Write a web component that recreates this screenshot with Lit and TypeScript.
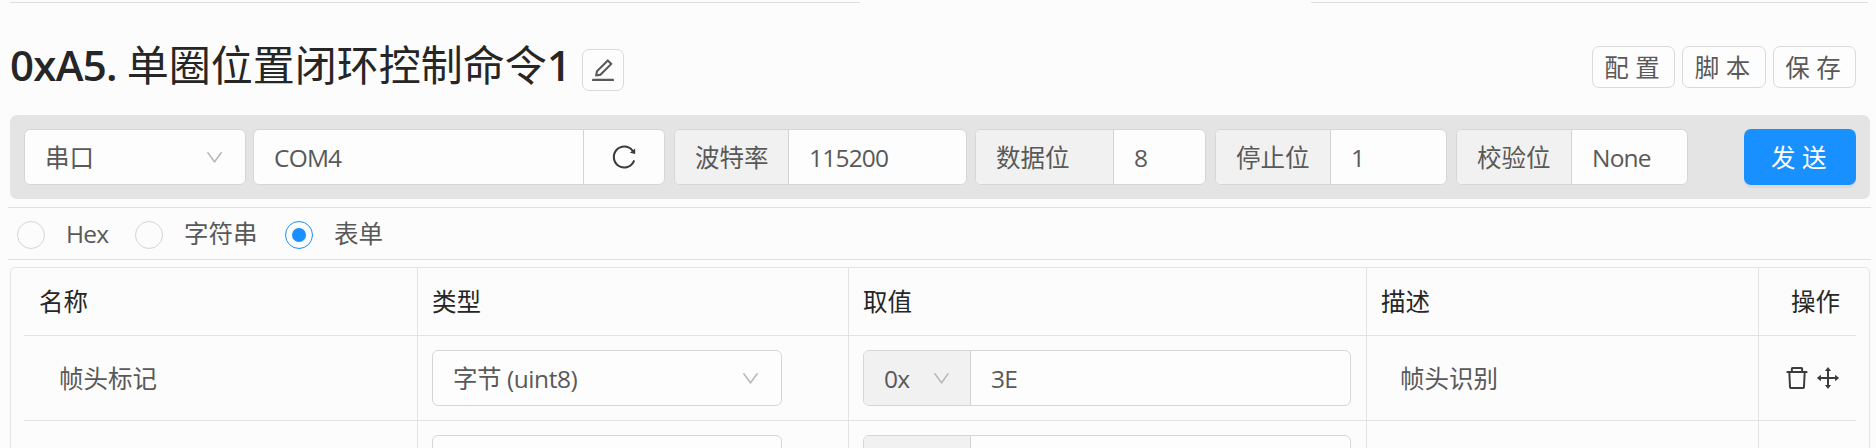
import { LitElement, html, css, svg } from "lit";
import { customElement, property } from "lit/decorators.js";

const ICONS: Record<string, string> = {
  edit: "M257.7 752c2 0 4-.2 6-.5L431.9 722c2-.4 3.9-1.3 5.3-2.8l423.9-423.9a9.96 9.96 0 000-14.1L694.9 114.9c-1.9-1.9-4.4-2.9-7.1-2.9s-5.2 1-7.1 2.9L256.8 538.8c-1.5 1.5-2.4 3.3-2.8 5.3l-29.5 168.2a33.5 33.5 0 009.4 29.8c6.6 6.4 14.9 9.9 23.8 9.9zm67.4-174.4L687.8 215l73.3 73.3-362.7 362.6-88.9 15.7 15.6-89zM880 836H144c-17.7 0-32 14.3-32 32v36c0 4.4 3.6 8 8 8h784c4.4 0 8-3.6 8-8v-36c0-17.7-14.3-32-32-32z",
  reload: "M909.1 209.3l-56.4 44.1C775.8 155.1 656.2 92 521.9 92 290 92 102.3 279.5 102 511.5 101.7 743.7 289.8 932 521.9 932c181.3 0 335.8-115 394.6-276.1 1.5-4.2-.7-8.9-4.9-10.3l-56.7-19.5a8 8 0 00-10.1 4.8c-1.8 5-3.8 10-5.9 14.9-17.3 41-42.1 77.8-73.7 109.4A344.77 344.77 0 01655.9 829c-42.3 17.9-87.4 27-133.8 27-46.5 0-91.5-9.1-133.8-27A341.5 341.5 0 01279 755.2a342.16 342.16 0 01-73.7-109.4c-17.9-42.4-27-87.4-27-133.9s9.1-91.5 27-133.9c17.3-41 42.1-77.8 73.7-109.4 31.6-31.6 68.4-56.4 109.3-73.8 42.3-17.9 87.4-27 133.8-27 46.5 0 91.5 9.1 133.8 27a341.5 341.5 0 01109.3 73.8c9.9 9.9 19.2 20.4 27.8 31.4l-60.2 47a8 8 0 003 14.1l175.6 43c5 1.2 9.9-2.6 9.9-7.7l.8-180.9c-.1-6.6-7.8-10.3-13-6.2z",
  trash: "M360 184h-8c4.4 0 8-3.6 8-8v8h304v-8c0 4.4 3.6 8 8 8h-8v72h72v-80c0-35.3-28.7-64-64-64H352c-35.3 0-64 28.7-64 64v80h72v-72zm504 72H160c-17.7 0-32 14.3-32 32v32c0 4.4 3.6 8 8 8h60.4l24.7 523c1.6 34.1 29.8 61 63.9 61h454c34.2 0 62.3-26.8 63.9-61l24.7-523H888c4.4 0 8-3.6 8-8v-32c0-17.7-14.3-32-32-32zM731.3 840H292.7l-24.2-512h487l-24.2 512z",
  drag: "M909.3 506.3L781.7 405.6a7.23 7.23 0 00-11.7 5.7V476H548V254h64.8c6 0 9.4-7 5.7-11.7L517.7 114.7a7.14 7.14 0 00-11.3 0L405.6 242.3a7.23 7.23 0 005.7 11.7H476v222H254v-64.8c0-6-7-9.4-11.7-5.7L114.7 506.3a7.14 7.14 0 000 11.3l127.5 100.8c4.7 3.7 11.7.4 11.7-5.7V548h222v222h-64.8c-6 0-9.4 7-5.7 11.7l100.8 127.5c2.9 3.7 8.5 3.7 11.3 0l100.8-127.5c3.7-4.7.4-11.7-5.7-11.7H548V548h222v64.8c0 6 7 9.4 11.7 5.7l127.5-100.8a7.3 7.3 0 00.1-11.4z",
  down: "M884 256h-75c-5.1 0-9.9 2.5-12.9 6.6L512 654.2 227.9 262.6c-3-4.1-7.8-6.6-12.9-6.6h-75c-6.5 0-10.3 7.4-6.5 12.7l352.6 486.1c12.8 17.6 39 17.6 51.7 0l352.6-486.1c3.9-5.3.1-12.7-6.4-12.7z",
};

@customElement("ui-icon")
class UiIcon extends LitElement {
  @property() name = "down";
  static styles = css`
    :host { display: block; width: 28px; height: 28px; flex: none; }
    svg { display: block; width: 100%; height: 100%; fill: currentColor; }
  `;
  render() {
    return html`<svg viewBox="0 0 1024 1024">${svg`<path d=${ICONS[this.name]}></path>`}</svg>`;
  }
}

@customElement("app-root")
class AppRoot extends LitElement {
  static styles = css`
    :host {
      display: block; height: 448px; overflow: hidden; background: #fcfcfc; color: #595959;
      font: 24.5px/36px "Open Sans", "Noto Sans CJK SC", sans-serif;
    }
    * { box-sizing: border-box; }
    .page { padding: 2px 6px 0 10px; }
    .tabline { display: flex; justify-content: space-between; height: 1px; }
    .tabline i { background: #dedee2; width: 850px; }
    .tabline i + i { width: 557px; margin-right: 2px; }
    .head { display: flex; height: 112px; padding: 42px 14px 0 0; align-items: flex-start; }
    .title {
      width: 557px; margin: -8px 15px 0 0; white-space: nowrap; color: #262626;
      font-size: 42px; line-height: 56px; font-weight: 400;
    }
    .title b { font-weight: 600; letter-spacing: -0.75px; }
    .btn {
      height: 42px; border: 1px solid #d9d9de; border-radius: 7px; background: #fdfdfd;
      display: flex; align-items: center; justify-content: center;
    }
    .edit { width: 42px; margin-top: 4px; }
    .actions { margin: 1px 0 0 auto; display: flex; gap: 7px; }
    .actions .btn { width: 83.5px; letter-spacing: 6.5px; padding: 2px 0 0 4px; }
    .bar {
      display: flex; width: 1860px; height: 84px; padding: 14px; border-radius: 7px; background: #e4e4e4;
    }
    .box {
      display: flex; height: 56px; border: 1px solid #d6d6da; border-radius: 6px; background: #fdfdfd; overflow: hidden;
    }
    .cell { display: flex; align-items: center; padding: 1px 19px 0 20px; white-space: nowrap; }
    .cell + .cell { border-left: 1px solid #d3d3d8; }
    .grow { flex: 1; }
    .addon { background: #f1f1f1; }
    .lat { letter-spacing: -0.8px; }
    .spread { justify-content: space-between; }
    .chev { width: 21px; height: 21px; color: #b8b8bc; margin-right: 1px; }
    .kind { width: 222px; margin-right: 7px; }
    .port { width: 412px; margin-right: 9px; }
    .reload { width: 81px; justify-content: center; padding: 0; color: #3c3c3c; }
    .baud { width: 293px; margin-right: 8px; }
    .data { width: 231px; margin-right: 9px; }
    .stop { width: 232px; margin-right: 9px; }
    .parity { width: 232px; }
    .w113 { width: 113px; }
    .w114 { width: 114px; }
    .w138 { width: 137px; }
    .send {
      margin-left: auto; width: 112px; height: 56px; border-radius: 7px; background: #1890ff; color: #fff;
      display: flex; align-items: center; justify-content: center; letter-spacing: 6.5px; padding: 2px 0 0 4px;
      box-shadow: 0 3px 0 rgba(0, 0, 0, 0.045);
    }
    .modes {
      display: flex; align-items: center; height: 53px; width: 1863px; margin: 8px 0 0 -2px; padding-left: 9px;
      border-top: 1px solid #dfdfe6; border-bottom: 1px solid #dfdfe6;
    }
    .radio {
      width: 28px; height: 28px; border: 1px solid #d5d5da; border-radius: 50%; flex: none; margin-top: 2px;
      display: flex; align-items: center; justify-content: center;
    }
    .radio.on { border: 1.5px solid #1890ff; }
    .radio.on::after { content: ""; width: 14px; height: 14px; border-radius: 50%; background: #1890ff; }
    .mode { padding: 1px 0 0 21px; }
    .m1 { width: 90px; } .m2 { width: 122px; } .m3 { width: 100px; }
    .table {
      width: 1860px; height: 200px; margin-top: 7px; border: 1px solid #e2e2e8; border-radius: 5px;
      padding: 0 13px;
    }
    .row { display: grid; grid-template-columns: 393px 431px 518px 392px 97px; height: 85px; border-bottom: 1px solid #e2e2e6; }
    .row.h { height: 68px; color: #262626; }
    .row > div { border-left: 1px solid #e4e4e4; padding-left: 14px; display: flex; align-items: center; }
    .row.h > div { padding-top: 1px; }
    .row > div:first-child { border-left: 0; padding-left: 15px; }
    .row.h > div:last-child { padding-left: 32px; }
    .row > .txt { padding: 2px 0 0 33px; }
    .row > .txt:first-child { padding-left: 35px; }
    .row > .ops { padding-left: 24px; gap: 3px; color: #3c3c3c; }
    .type { width: 350px; }
    .type .lat { letter-spacing: -0.45px; }
    .value { width: 488px; }
    .pre { width: 106px; padding-right: 17px; }
  `;

  private row(name: string, type: string, pre: string, value: string, desc: string, last = false) {
    return html`<div class="row">
      <div class="txt">${name}</div>
      <div><span class="box type"><span class="cell grow spread"><span class="lat">${type}</span><ui-icon class="chev"></ui-icon></span></span></div>
      <div><span class="box value">
        <span class="cell addon pre spread"><span class="lat">${pre}</span><ui-icon class="chev"></ui-icon></span>
        <span class="cell grow lat">${value}</span></span></div>
      <div class="txt">${desc}</div>
      <div class="ops">${last ? "" : html`<ui-icon name="trash"></ui-icon><ui-icon name="drag"></ui-icon>`}</div>
    </div>`;
  }

  private field(cls: string, label: string, value: string, labelCls = "w114") {
    return html`<div class="box ${cls}"><span class="cell addon ${labelCls}">${label}</span><span class="cell grow lat">${value}</span></div>`;
  }

  render() {
    return html`<div class="page">
      <div class="tabline"><i></i><i></i></div>
      <div class="head">
        <div class="title"><b>0xA5. </b>单圈位置闭环控制命令<b>1</b></div>
        <div class="btn edit"><ui-icon name="edit"></ui-icon></div>
        <div class="actions">
          ${["配置", "脚本", "保存"].map((t) => html`<div class="btn">${t}</div>`)}
        </div>
      </div>
      <div class="bar">
        <div class="box kind"><span class="cell grow spread">串口<ui-icon class="chev"></ui-icon></span></div>
        <div class="box port"><span class="cell grow lat">COM4</span><span class="cell reload"><ui-icon name="reload"></ui-icon></span></div>
        ${this.field("baud", "波特率", "115200", "w113")}
        ${this.field("data", "数据位", "8", "w138")}
        ${this.field("stop", "停止位", "1")}
        ${this.field("parity", "校验位", "None")}
        <div class="send">发送</div>
      </div>
      <div class="modes">
        <span class="radio"></span><span class="mode m1 lat">Hex</span>
        <span class="radio"></span><span class="mode m2">字符串</span>
        <span class="radio on"></span><span class="mode m3">表单</span>
      </div>
      <div class="table">
        <div class="row h">${["名称", "类型", "取值", "描述", "操作"].map((t) => html`<div>${t}</div>`)}</div>
        ${this.row("帧头标记", "字节 (uint8)", "0x", "3E", "帧头识别")}
        ${this.row("", "", "", "", "", true)}
      </div>
    </div>`;
  }
}
